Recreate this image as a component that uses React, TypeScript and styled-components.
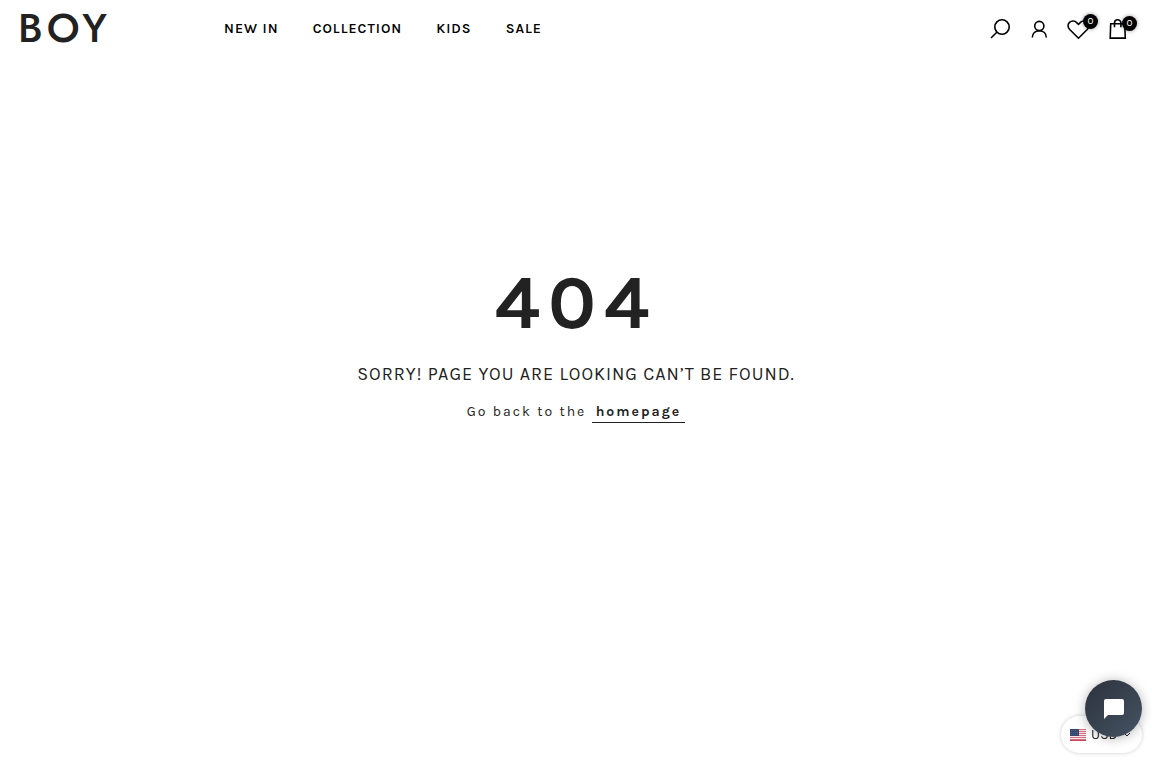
import React from "react";
import styled, { createGlobalStyle } from "styled-components";

const GlobalStyle = createGlobalStyle`
  * { box-sizing: border-box; }
  body {
    margin: 0;
    background: #fff;
    color: #222;
    font-family: Karla, Roboto, "Liberation Sans", sans-serif;
    font-size: 14px;
  }
  a { color: inherit; text-decoration: none; }
  button { font: inherit; color: inherit; background: none; border: 0; padding: 0; cursor: pointer; }
`;

const Header = styled.header`
  display: flex;
  align-items: center;
  height: 56px;
  padding: 0 22px 0 18px;
`;

const Logo = styled.a`
  flex: 0 0 206px;
  font-family: Jost, Lato, sans-serif;
  font-size: 41px;
  font-weight: 500;
  line-height: 48px;
  letter-spacing: 4px;
`;

const Nav = styled.nav`
  display: flex;
  flex: 1;
  gap: 34px;
  padding-top: 2px;
`;

const NavLink = styled.a`
  color: #000;
  font-size: 14px;
  font-weight: 600;
  line-height: 20px;
  letter-spacing: 1px;
  text-transform: uppercase;
  white-space: nowrap;
`;

const Actions = styled.div`
  display: flex;
  gap: 15px;
  padding-top: 2px;
`;

const Action = styled.a`
  position: relative;
  display: block;
  width: 24px;
  height: 24px;
  color: #000;

  svg { display: block; }
`;

const Badge = styled.span`
  position: absolute;
  top: ${(p: { $top: number }) => p.$top}px;
  right: -7px;
  width: 15px;
  height: 15px;
  border-radius: 50%;
  background: #000;
  box-shadow: 0 0 4px rgba(0, 0, 0, 0.4);
  color: #fff;
  font-size: 10px;
  line-height: 15px;
  text-align: center;
`;

const Main = styled.main`
  padding: 201px 20px 80px;
  text-align: center;
`;

const Code = styled.h1`
  margin: 0;
  font-size: 76px;
  font-weight: 700;
  line-height: 92px;
  letter-spacing: 8px;
`;

const Message = styled.h2`
  margin: 12px 0 0;
  font-size: 18px;
  font-weight: 400;
  line-height: 26px;
  letter-spacing: 1px;
  text-transform: uppercase;
`;

const Hint = styled.p`
  margin: 15px 0 0;
  font-size: 14px;
  line-height: 20px;
  letter-spacing: 2px;
`;

const HomeLink = styled.a`
  display: inline-block;
  padding: 0 4px;
  border-bottom: 1px solid #222;
  font-weight: 700;
`;

const Currency = styled.button`
  position: fixed;
  right: 10px;
  bottom: 15px;
  display: flex;
  align-items: center;
  gap: 5px;
  width: 81px;
  height: 37px;
  padding: 0 9px;
  border-radius: 19px;
  background: #fff;
  box-shadow: 0 0 4px rgba(0, 0, 0, 0.2);
  font-size: 14px;
`;

const Chat = styled.button`
  position: fixed;
  right: 10px;
  bottom: 31px;
  display: flex;
  align-items: center;
  justify-content: center;
  width: 57px;
  height: 57px;
  border-radius: 50%;
  background: linear-gradient(135deg, #2a323c, #465363);
  box-shadow: 0 1px 12px rgba(0, 0, 0, 0.3);
`;

const navItems = ["New in", "Collection", "Kids", "Sale"];

const stroke = { fill: "none", stroke: "currentColor", strokeWidth: 1.6 };

function Flag() {
  return (
    <svg width="16" height="12" viewBox="0 0 16 12" aria-hidden="true">
      <rect width="16" height="12" fill="#f4e6e8" />
      {[0, 2, 4, 6, 8, 10].map((y) => (
        <rect key={y} y={y} width="16" height="1" fill="#d4707f" />
      ))}
      <rect y="11" width="16" height="1" fill="#c8475a" />
      <rect width="9" height="7" fill="#35466f" />
      <path d="M1 1.5h7M1 3.5h7M1 5.5h7" stroke="#5c6a90" strokeWidth=".7" strokeDasharray="1 1" />
    </svg>
  );
}

export default function App() {
  return (
    <>
      <GlobalStyle />
      <Header>
        <Logo href="#">BOY</Logo>
        <Nav aria-label="Main">
          {navItems.map((item) => (
            <NavLink key={item} href="#">{item}</NavLink>
          ))}
        </Nav>
        <Actions>
          <Action href="#" aria-label="Search">
            <svg width="24" height="24" viewBox="0 0 24 24" {...stroke}>
              <circle cx="13" cy="10" r="7.2" />
              <path d="M7.800 15.200 2 21" />
            </svg>
          </Action>
          <Action href="#" aria-label="Account">
            <svg width="24" height="24" viewBox="0 0 24 24" {...stroke}>
              <circle cx="11.300" cy="9" r="4.600" />
              <path d="M4.300 20.500c0-4.200 3-6.800 7-6.800s7 2.600 7 6.800" />
            </svg>
          </Action>
          <Action href="#" aria-label="Wishlist">
            <svg width="24" height="24" viewBox="0 0 24 24" {...stroke}>
              <path d="M11.500 21.200 2.700 12.500C.6 10.300.5 7.300 2.500 5.400c2.100-2 5.300-1.700 7.200.2L11.500 7.300l1.700-1.700c1.900-1.900 5.100-2.200 7.200-.2 2 1.900 1.900 4.900-.2 7.100Z" />
            </svg>
            <Badge $top={-3}>0</Badge>
          </Action>
          <Action href="#" aria-label="Cart">
            <svg width="24" height="24" viewBox="0 0 24 24" {...stroke}>
              <path d="M4.700 6.700h14l.6 14.400H4.200ZM8.500 10.300V6a3.200 3.200 0 0 1 6.400 0v4.300" />
            </svg>
            <Badge $top={-1}>0</Badge>
          </Action>
        </Actions>
      </Header>
      <Main>
        <Code>404</Code>
        <Message>Sorry! Page you are looking can’t be found.</Message>
        <Hint>
          Go back to the <HomeLink href="#">homepage</HomeLink>
        </Hint>
      </Main>
      <Currency type="button">
        <Flag />
        <span>USD</span>
        <svg width="8" height="6" viewBox="0 0 8 6" {...stroke} strokeWidth="1" aria-hidden="true">
          <path d="m1 1 3 3 3-3" />
        </svg>
      </Currency>
      <Chat type="button" aria-label="Open chat">
        <svg width="20" height="20" viewBox="0 0 20 20" fill="#fff">
          <path d="M2 0h16a2 2 0 0 1 2 2v12a2 2 0 0 1-2 2H4l-4 4V2a2 2 0 0 1 2-2Z" />
        </svg>
      </Chat>
    </>
  );
}
